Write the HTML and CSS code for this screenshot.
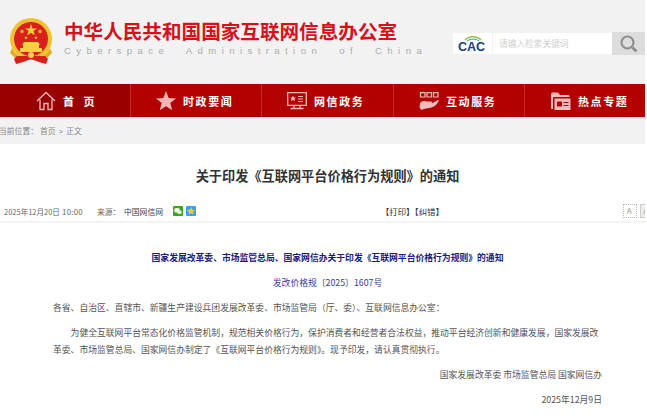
FILE: index.html
```html
<!DOCTYPE html>
<html lang="zh-CN">
<head>
<meta charset="utf-8">
<title>关于印发《互联网平台价格行为规则》的通知</title>
<link rel="stylesheet" href="styles.css">
</head>
<body>
<div class="page">
  <header class="top">
    <svg class="emblem" viewBox="0 0 44 46" width="44" height="46">
      <circle cx="22" cy="21" r="21" fill="#f2c12e"/>
      <circle cx="22" cy="21" r="17" fill="#d9201c"/>
      <path d="M22 6l1.5 4.400h4.600l-3.700 2.700 1.400 4.400-3.800-2.700-3.800 2.700 1.400-4.400-3.700-2.700h4.600z" fill="#f6d23c"/>
      <path d="M13 11l.7 1.600 1.700.1-1.300 1.100.4 1.700-1.500-.9-1.500.9.400-1.700-1.300-1.100 1.700-.1zM31 11l.7 1.600 1.700.1-1.300 1.100.4 1.700-1.500-.9-1.500.9.400-1.700-1.300-1.100 1.700-.1zM17 18l.5 1.100 1.200.1-.9.800.3 1.200-1.100-.6-1.100.6.300-1.200-.9-.8 1.200-.1zM27 18l.5 1.100 1.200.1-.9.800.3 1.200-1.100-.6-1.100.6.300-1.200-.9-.8 1.200-.1z" fill="#f6d23c"/>
      <path d="M15 24h14l2 3H13zM14 27h16v3H14zM11 30h22v4H11z" fill="#f6d23c"/>
      <path d="M3 30c3 7 9 11 19 11s16-4 19-11l2 5-6 6H7l-6-6z" fill="#e6a91f"/>
      <path d="M8 38h28l3 3-2 5-7-2-8-3-8 3-7 2-2-5z" fill="#d9201c"/>
      <circle cx="22" cy="37" r="3" fill="#f6d23c"/>
    </svg>
    <div class="brand">
      <div class="brand-cn">中华人民共和国国家互联网信息办公室</div>
      <div class="brand-en">Cyberspace Administration of China</div>
    </div>
    <div class="search">
      <div class="cac">
        <svg viewBox="0 0 32 21" width="32" height="21">
          <path d="M8 7C12 2.500 20 2.500 24 7" fill="none" stroke="#8cc63f" stroke-width="1.500"/>
          <path d="M10 8C13 5.500 19 5.500 22 8" fill="none" stroke="#19a7a0" stroke-width="1"/>
          <text x="1" y="18" class="cac-text">CAC</text>
        </svg>
      </div>
      <div class="search-input">请输入检索关键词</div>
      <div class="search-btn">
        <svg viewBox="0 0 20 20" width="20" height="20">
          <circle cx="8.500" cy="8.500" r="6" fill="none" stroke="#8f8f8f" stroke-width="2.200"/>
          <path d="M13.500 13.500l4 4" stroke="#8f8f8f" stroke-width="2.800"/>
        </svg>
      </div>
    </div>
  </header>

  <nav class="nav">
    <a class="nav-item active">
      <svg class="ico" viewBox="0 0 20 20" width="20" height="20"><path d="M1 10L10 1.500 19 10M4 8.500V18.500H8V12.500H12V18.500H16V8.500" fill="none" stroke="#f3bcbc" stroke-width="1.300"/></svg>
      <span class="wide">首 页</span>
    </a>
    <a class="nav-item">
      <svg class="ico" viewBox="0 0 20 20" width="20" height="20"><path d="M10 0l2.700 6.900 7.300.5-5.700 4.600 1.900 7.200L10 15.200 3.800 19.200l1.900-7.200L0 7.400l7.300-.5z" fill="#f3b4b4"/></svg>
      <span>时政要闻</span>
    </a>
    <a class="nav-item">
      <svg class="ico" viewBox="0 0 20 18" width="20" height="18"><path d="M.7.700h18.600v12.600H.7zM7 13.500v2M13 13.500v2M3.500 16.500h13" fill="none" stroke="#f3bcbc" stroke-width="1.300"/><path d="M6 3.500l.9 2 2.100.2-1.600 1.400.5 2.100L6 8.100 4.100 9.200l.5-2.100L3 5.700l2.100-.2z" fill="#f3bcbc"/><path d="M11 4.500h5M11 7h5M11 9.500h5" stroke="#f3bcbc" stroke-width="1"/></svg>
      <span>网信政务</span>
    </a>
    <a class="nav-item">
      <svg class="ico" viewBox="0 0 20 18" width="20" height="18"><path d="M1.500.700h4.500v4.300H1.500zM8 .700h4.500v4.300H8zM14.500.700h4.500v4.300h-4.500z" fill="none" stroke="#f3bcbc" stroke-width="1.200"/><path d="M1 11c2-2.500 5-2.500 7-1.500h4c1.500 0 1.500 2 0 2H9h3.500l6.500-3.500c.8 0 1 .8.500 1.500-2 3.500-5 6-9 6.500-3 .3-6 1-8 2l-2-2.500z" fill="#f3bcbc"/></svg>
      <span>互动服务</span>
    </a>
    <a class="nav-item">
      <svg class="ico" viewBox="0 0 20 18" width="20" height="18"><path d="M0 2.500C0 1 1 .5 2 .5h5l2 2.500h8c1 0 1.500.5 1.500 1.500V5H3.500C2.500 5 2 5.500 2 6.500V17H1c-.6 0-1-.5-1-1z" fill="#f3bcbc"/><path d="M3.500 6.500h16V18h-16z" fill="#f3bcbc"/><path d="M6 9.500h5v5H6z" fill="#b30000"/><path d="M12.500 10.500h5M12.500 13.500h5" stroke="#b30000" stroke-width="1.200"/></svg>
      <span>热点专题</span>
    </a>
  </nav>

  <div class="crumb">
    <span class="crumb-here">当前位置：</span><span class="crumb-link">首页</span><span class="crumb-sep">&gt;</span><span>正文</span>
  </div>

  <main class="article">
    <h1 class="title">关于印发《互联网平台价格行为规则》的通知</h1>
    <div class="meta">
      <span class="date">2025年12月20日</span>
      <span class="time">10:00</span>
      <span class="src-label">来源：</span>
      <span class="src">中国网信网</span>
      <svg class="share" viewBox="0 0 10 10" width="10" height="10"><rect width="10" height="10" rx="1" fill="#3aa81e"/><ellipse cx="4" cy="4.200" rx="2.800" ry="2.300" fill="#fff"/><ellipse cx="6.500" cy="6.200" rx="2.300" ry="1.900" fill="#e4f3df"/></svg>
      <svg class="share" viewBox="0 0 10 10" width="10" height="10"><rect width="10" height="10" rx="1" fill="#3a9fec"/><path d="M5 1l1.200 2.700 2.900.3-2.200 1.900.7 2.900L5 7.300 2.400 8.800l.7-2.900L.9 4l2.900-.3z" fill="#f3c93c"/></svg>
      <span class="tools">【打印】【纠错】</span>
      <span class="size">A<sup>-</sup></span>
      <span class="size solid">A<sup>+</sup></span>
    </div>
    <div class="body">
      <p class="head">国家发展改革委、市场监管总局、国家网信办关于印发《互联网平台价格行为规则》的通知</p>
      <p class="num">发改价格规〔2025〕1607号</p>
      <p class="line">各省、自治区、直辖市、新疆生产建设兵团发展改革委、市场监管局（厅、委）、互联网信息办公室：</p>
      <p class="para">为健全互联网平台常态化价格监管机制，规范相关价格行为，保护消费者和经营者合法权益，推动平台经济创新和健康发展，国家发展改革委、市场监管总局、国家网信办制定了《互联网平台价格行为规则》。现予印发，请认真贯彻执行。</p>
      <p class="right">国家发展改革委 市场监管总局 国家网信办</p>
      <p class="right">2025年12月9日</p>
    </div>
  </main>
</div>
</body>
</html>
```

FILE: styles.css
```css
* { box-sizing: border-box; }
html, body { margin: 0; padding: 0; background: #fff; overflow: hidden; height: 420px; }
body { font-family: "Noto Sans CJK SC", "Liberation Sans", sans-serif; color: #444; }
.page { width: 645px; overflow: hidden; }

.top { height: 84px; background: #f2f2f2; display: flex; align-items: flex-start; padding: 18px 0 0 9px; }
.emblem { flex: none; }
.brand { margin-left: 11px; width: 340px; }
.brand-cn { font-size: 19.6px; line-height: 24px; font-weight: 700; color: #d8101c; white-space: nowrap; margin-top: 1px; }
.brand-en { font-family: "Liberation Sans", sans-serif; font-size: 9.6px; line-height: 12px; color: #adadad; letter-spacing: 5.400px; word-spacing: 9px; white-space: nowrap; margin-top: 2px; }

.search { margin-left: auto; margin-top: 14px; display: flex; align-items: center; height: 23px; }
.cac { width: 39px; height: 21px; background: #fff; display: flex; align-items: center; justify-content: center; margin-right: 1px; }
.cac-text { font-family: "Liberation Sans", sans-serif; font-size: 12.500px; font-weight: 700; fill: #17407f; }
.search-input { width: 119px; height: 21px; background: #fff; font-size: 8.700px; line-height: 21px; color: #cfcfcf; padding-left: 6px; }
.search-btn { width: 33px; height: 23px; background: #ddd; display: flex; align-items: center; justify-content: center; }

.nav { height: 33px; background: #b30000; display: grid; grid-template-columns: 131px 131px 132px 131px 120px; }
.nav-item { display: flex; align-items: center; padding-left: 36px; gap: 7px; color: #fff; font-size: 11px; font-weight: 700; letter-spacing: 1.600px; border-right: 1px solid #c8282a; white-space: nowrap; }
.nav-item:nth-child(n+2) { padding-left: 25px; }
.nav-item:last-child { border-right: 0; padding-left: 26px; }
.nav-item.active { background: #9b0000; }
.nav-item .wide { word-spacing: 5px; letter-spacing: 1px; }
.ico { flex: none; }

.crumb { height: 27px; background: #f2f2f2; border-top: 1px solid #e6e6e6; font-size: 7.800px; line-height: 26px; color: #888; white-space: nowrap; }
.crumb-here { margin-left: -1px; }
.crumb-link { margin-left: 2px; }
.crumb-sep { margin: 0 3px; font-family: "Liberation Sans", sans-serif; }

.title { margin: 0; padding: 22px 0 0 10px; height: 57px; font-size: 13.200px; line-height: 19px; font-weight: 700; color: #333; text-align: center; }
.meta { height: 20px; display: flex; align-items: center; font-size: 7.800px; color: #666; padding-left: 4px; white-space: nowrap; }
.meta > * { flex: none; }
.date { width: 58px; font-size: 7.500px; }
.time { width: 35px; letter-spacing: .3px; }
.src-label { width: 27px; }
.src { width: 49px; color: #444; }
.share { margin-right: 3px; }
.tools { margin-left: 182px; font-size: 8.400px; color: #333; width: 242px; }
.size { width: 14px; height: 14px; border: 1px dotted #bbb; font-size: 8px; line-height: 12px; text-align: center; color: #999; margin-right: 3px; }
.size.solid { background: #eee; border: 1px solid #ccc; }
.size sup { font-size: 5px; line-height: 0; }

.body { border-top: 2px solid #f4f4f4; padding: 26px 43px 0 53px; font-size: 8.800px; line-height: 17px; color: #555; }
.body p { margin: 0 0 8px; }
.head { text-align: center; font-weight: 700; color: #1a1a80; }
.num { text-align: center; color: #3b3b9b; }
.para { text-indent: 2em; }
.right { text-align: right; }
```
